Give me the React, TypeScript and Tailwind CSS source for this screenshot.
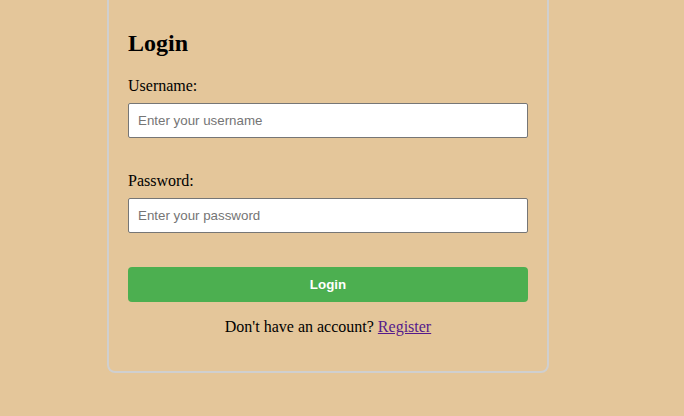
import React, { useState } from 'react';

const App: React.FC = () => {
  const [username, setUsername] = useState('');
  const [password, setPassword] = useState('');

  return (
    <div className="min-h-screen w-full bg-[#e4c69a] font-['Liberation_Serif',serif] text-black overflow-hidden">
      {/* Login Card */}
      <div className="ml-[107px] mt-[-11px] w-[442px] border-2 border-[#cfcfcf] rounded-lg p-[19px]">
        <h2 className="text-[24px] font-bold leading-[normal] my-[20px]">Login</h2>

        <form onSubmit={(e) => e.preventDefault()}>
          {/* Username */}
          <label className="block text-[16px] leading-[normal] mb-2">Username:</label>
          <input
            type="text"
            value={username}
            onChange={(e) => setUsername(e.target.value)}
            placeholder="Enter your username"
            className="block w-full h-[35px] bg-white border border-[#767676] rounded-[2px] px-[9px] text-[13.333px] font-['Liberation_Sans',Arial,sans-serif] placeholder:text-[#757575] mb-[34px]"
          />

          {/* Password */}
          <label className="block text-[16px] leading-[normal] mb-2">Password:</label>
          <input
            type="password"
            value={password}
            onChange={(e) => setPassword(e.target.value)}
            placeholder="Enter your password"
            className="block w-full h-[35px] bg-white border border-[#767676] rounded-[2px] px-[9px] text-[13.333px] font-['Liberation_Sans',Arial,sans-serif] placeholder:text-[#757575] mb-[34px]"
          />

          {/* Submit */}
          <button
            type="submit"
            className="block w-full h-[35px] bg-[#4caf50] text-white rounded-[4px] text-[13.333px] font-bold font-['Liberation_Sans',Arial,sans-serif]"
          >
            Login
          </button>
        </form>

        <p className="text-center text-[16px] leading-[normal] my-4">
          Don't have an account?{' '}
          <a href="#" className="text-[#551a8b] underline">Register</a>
        </p>
      </div>
    </div>
  );
};

export default App;
